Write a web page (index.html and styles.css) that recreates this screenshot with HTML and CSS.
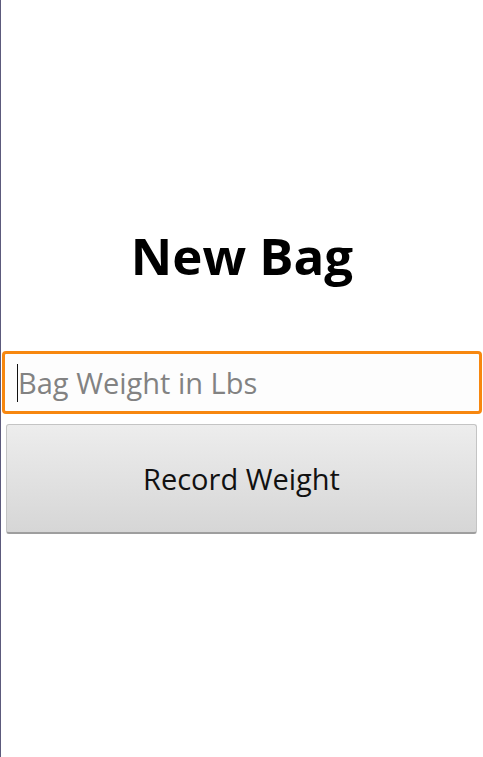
FILE: index.html
```html
<!DOCTYPE html>
<html>
<head>
<meta charset="utf-8">
<link rel="stylesheet" href="styles.css">
</head>
<body>
<div class="screen">
  <h1 class="title">New Bag</h1>
  <div class="field">
    <span class="cursor"></span>
    <span class="placeholder">Bag Weight in Lbs</span>
  </div>
  <div class="button">Record Weight</div>
</div>
</body>
</html>
```

FILE: styles.css
```css
html, body {
  margin: 0;
  padding: 0;
  background: #ffffff;
}
.screen {
  width: 483px;
  height: 757px;
  box-sizing: border-box;
  border-left: 1px solid #5c5a7c;
  display: flex;
  flex-direction: column;
  align-items: stretch;
  padding-top: 222px;
  font-family: "Open Sans", "Noto Sans", sans-serif;
}
.title {
  margin: 0;
  height: 66px;
  line-height: 66px;
  text-align: center;
  font-size: 51px;
  font-weight: 700;
  color: #000;
  letter-spacing: 0;
}
.field {
  margin: 63px 1px 0 1px;
  height: 63px;
  box-sizing: border-box;
  border: 3px solid #f7870f;
  border-radius: 4px;
  background: #fdfdfd;
  display: flex;
  align-items: center;
  padding-left: 12px;
  gap: 0;
}
.cursor {
  width: 1px;
  height: 38px;
  background: #111;
}
.placeholder {
  font-size: 29px;
  color: #828282;
  line-height: 38px;
}
.button {
  margin: 10px 6px 0 5px;
  height: 110px;
  box-sizing: border-box;
  border: 1px solid #c4c4c4;
  border-bottom: 2px solid #9e9e9e;
  border-radius: 3px;
  background: linear-gradient(#ededed, #d6d6d6);
  display: flex;
  align-items: center;
  justify-content: center;
  font-size: 29px;
  color: #111;
}
```
